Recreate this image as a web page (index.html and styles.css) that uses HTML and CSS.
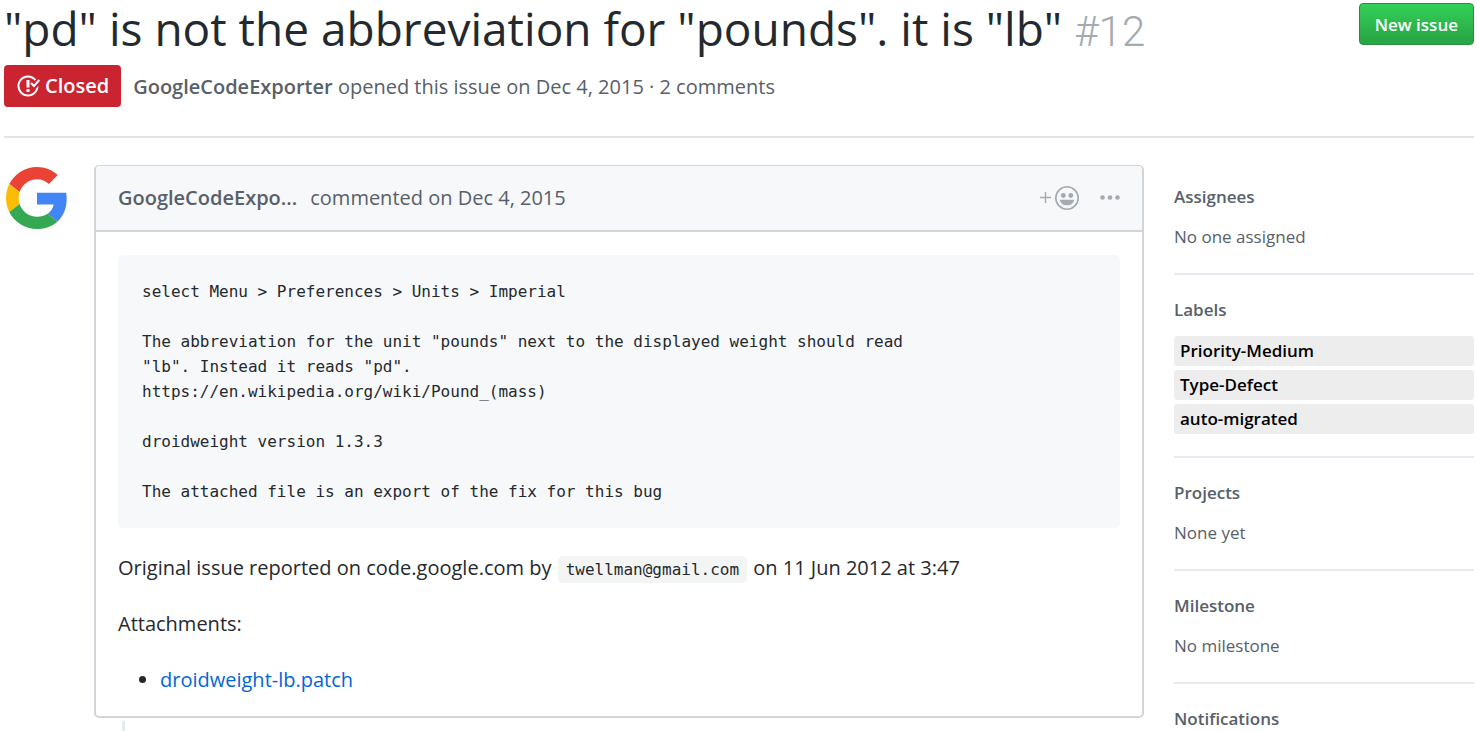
FILE: index.html
```html
<!DOCTYPE html>
<html lang="en">
<head>
<meta charset="utf-8">
<meta name="viewport" content="width=device-width, initial-scale=1">
<title>"pd" is not the abbreviation for "pounds". it is "lb" · Issue #12</title>
<link rel="stylesheet" href="styles.css">
</head>
<body>
<div class="page">
  <header class="issue-header">
    <div class="title-row">
      <h1 class="title">"pd" is not the abbreviation for "pounds". it is "lb" <span class="number">#12</span></h1>
      <button class="new-issue" type="button">New issue</button>
    </div>
    <div class="meta-row">
      <span class="state">
        <svg class="state-icon" viewBox="0 0 16 16" aria-hidden="true"><path d="M7 10h2v2H7v-2zm2-6H7v5h2V4zm1.5 1.5l-1 1L12 9l4-4.5-1-1L12 7l-1.5-1.5zM8 13.7A5.71 5.71 0 0 1 2.3 8c0-3.14 2.56-5.7 5.7-5.7 1.83 0 3.45.88 4.5 2.2l.92-.92A6.947 6.947 0 0 0 8 1C4.14 1 1 4.14 1 8s3.14 7 7 7 7-3.14 7-7l-1.52 1.52c-.66 2.41-2.86 4.19-5.48 4.19v-.01z"/></svg>
        Closed
      </span>
      <p class="meta"><strong>GoogleCodeExporter</strong> opened this issue on Dec 4, 2015 · 2 comments</p>
    </div>
  </header>

  <div class="columns">
    <svg class="avatar" viewBox="0 0 48 48" role="img" aria-label="GoogleCodeExporter">
      <path fill="#ea4335" d="M24 9.5c3.54 0 6.71 1.22 9.21 3.6l6.85-6.85C35.9 2.38 30.47 0 24 0 14.62 0 6.51 5.38 2.56 13.22l7.98 6.19C12.43 13.72 17.74 9.5 24 9.5z"/>
      <path fill="#4285f4" d="M46.98 24.55c0-1.57-.15-3.09-.38-4.55H24v9.02h12.94c-.58 2.96-2.26 5.48-4.78 7.18l7.73 6c4.51-4.18 7.09-10.36 7.09-17.65z"/>
      <path fill="#fbbc05" d="M10.53 28.59c-.48-1.45-.76-2.99-.76-4.59s.27-3.14.76-4.59l-7.98-6.19C.92 16.46 0 20.12 0 24c0 3.88.92 7.54 2.56 10.78l7.97-6.19z"/>
      <path fill="#34a853" d="M24 48c6.48 0 11.93-2.13 15.89-5.81l-7.73-6c-2.15 1.45-4.92 2.3-8.16 2.3-6.26 0-11.57-4.22-13.47-9.91l-7.98 6.19C6.51 42.62 14.62 48 24 48z"/>
    </svg>

    <main class="timeline">
      <article class="comment">
        <header class="comment-header">
          <strong class="author">GoogleCodeExpo...</strong>
          <span class="when">commented on Dec 4, 2015</span>
          <button class="icon-button" type="button" aria-label="Add your reaction">
            <svg width="40" height="24" viewBox="0 0 40 24" aria-hidden="true">
              <path d="M0 11.5h11M5.5 6v11" fill="none" stroke="currentColor" stroke-width="1.4"/>
              <circle cx="27" cy="12" r="11.2" fill="none" stroke="currentColor" stroke-width="1.6"/>
              <circle cx="23.3" cy="9.5" r="2.4"/><circle cx="30.8" cy="9.5" r="2.4"/>
              <path d="M19.7 13.8h14.6c-.7 3.5-3.5 5.5-7.3 5.5s-6.600-2-7.300-5.500z"/>
            </svg>
          </button>
          <button class="icon-button" type="button" aria-label="Show options">
            <svg width="20" height="24" viewBox="0 0 20 24" aria-hidden="true"><circle cx="2.500" cy="11.500" r="2.300"/><circle cx="10" cy="11.500" r="2.300"/><circle cx="17.500" cy="11.500" r="2.300"/></svg>
          </button>
        </header>
        <div class="comment-body">
<pre class="code">select Menu &gt; Preferences &gt; Units &gt; Imperial

The abbreviation for the unit "pounds" next to the displayed weight should read
"lb". Instead it reads "pd".
https://en.wikipedia.org/wiki/Pound_(mass)

droidweight version 1.3.3

The attached file is an export of the fix for this bug</pre>
          <p>Original issue reported on code.google.com by <code class="inline-code">twellman@gmail.com</code> on 11 Jun 2012 at 3:47</p>
          <p>Attachments:</p>
          <ul>
            <li><a href="#">droidweight-lb.patch</a></li>
          </ul>
        </div>
      </article>
      <div class="thread-line"></div>
    </main>

    <aside class="sidebar">
      <section>
        <h2>Assignees</h2>
        <p>No one assigned</p>
      </section>
      <section>
        <h2>Labels</h2>
        <div class="labels">
          <a class="label" href="#">Priority-Medium</a>
          <a class="label" href="#">Type-Defect</a>
          <a class="label" href="#">auto-migrated</a>
        </div>
      </section>
      <section>
        <h2>Projects</h2>
        <p>None yet</p>
      </section>
      <section>
        <h2>Milestone</h2>
        <p>No milestone</p>
      </section>
      <section>
        <h2>Notifications</h2>
      </section>
    </aside>
  </div>
</div>
</body>
</html>
```

FILE: styles.css
```css
* { box-sizing: border-box; }

body {
  margin: 0;
  background: #fff;
  color: #24292e;
  font-family: "Open Sans", "Noto Sans", sans-serif;
  font-size: 20px;
  line-height: 32px;
}

h1, h2, p, ul, pre { margin: 0; }

.page { padding: 3px 3px 0 4px; }

.issue-header {
  padding-bottom: 29px;
  border-bottom: 2px solid #e1e4e8;
}

.title-row {
  display: flex;
  justify-content: space-between;
  align-items: flex-start;
}

.title {
  font-size: 46px;
  font-weight: 400;
  line-height: 50px;
}

.number {
  color: #a3aab1;
  font-family: Roboto, sans-serif;
  font-size: 42px;
  font-weight: 300;
  line-height: 32px;
}

.new-issue {
  height: 42px;
  padding: 0 15px;
  border: 1px solid #28903c;
  border-radius: 4px;
  background: linear-gradient(#34d058, #28a745 90%);
  color: #fff;
  font: 600 17px "Open Sans", "Noto Sans", sans-serif;
  white-space: nowrap;
}

.meta-row {
  display: flex;
  align-items: center;
  gap: 12px;
  margin-top: 12px;
}

.state {
  display: flex;
  align-items: center;
  gap: 5px;
  height: 42px;
  padding: 0 12px;
  border-radius: 4px;
  background: #cb2431;
  color: #fff;
  font-weight: 600;
}

.state-icon { width: 24px; height: 24px; fill: currentColor; }

.meta { padding-top: 2px; color: #586069; }

strong { font-weight: 600; }

.columns {
  display: flex;
  align-items: flex-start;
  padding-top: 27px;
}

.avatar {
  flex: none;
  width: 62px;
  height: 62px;
  margin: 2px 26px 0 2px;
}

.timeline { flex: 1; min-width: 0; }

.comment {
  border: 2px solid #d1d5da;
  border-top-width: 1px;
  border-radius: 5px;
}

.comment-header {
  display: flex;
  align-items: center;
  height: 66px;
  padding: 0 22px;
  border-bottom: 2px solid #d1d5da;
  border-radius: 4px 4px 0 0;
  background: #f6f8fa;
  color: #586069;
}

.when { margin: 0 auto 0 13px; }

.icon-button {
  display: flex;
  margin-left: 20px;
  padding: 0;
  border: 0;
  background: none;
  color: #a3aab1;
}

.icon-button svg { fill: currentColor; }

.comment-body {
  display: flex;
  flex-direction: column;
  gap: 24px;
  padding: 23px 22px 20px;
}

.code {
  padding: 24px;
  border-radius: 5px;
  background: #f6f8fa;
  font: 16px/25px "DejaVu Sans Mono", monospace;
  overflow: hidden;
}

.inline-code {
  margin: 0 1px;
  padding: 4px 8px;
  border-radius: 5px;
  background: #f3f4f4;
  font: 16px "DejaVu Sans Mono", monospace;
}

.comment-body ul { padding-left: 42px; }

a { color: #0366d6; text-decoration: none; }

.thread-line {
  width: 3px;
  height: 12px;
  margin: 3px 0 0 28px;
  background: #e6ebf1;
}

.sidebar {
  flex: none;
  width: 300px;
  margin-left: 30px;
  padding-top: 19px;
  color: #586069;
  font-size: 17px;
  line-height: 28px;
}

.sidebar section + section {
  margin-top: 22px;
  padding-top: 22px;
  border-top: 2px solid #e6ebf1;
}

.sidebar h2 {
  font-size: 17px;
  font-weight: 600;
  line-height: 26px;
}

.sidebar h2 + * { margin-top: 13px; }

.labels {
  display: grid;
  gap: 4px;
}

.label {
  padding: 0 6px;
  border-radius: 3px;
  background: #ededed;
  color: #000;
  font-weight: 600;
  line-height: 30px;
}
```
